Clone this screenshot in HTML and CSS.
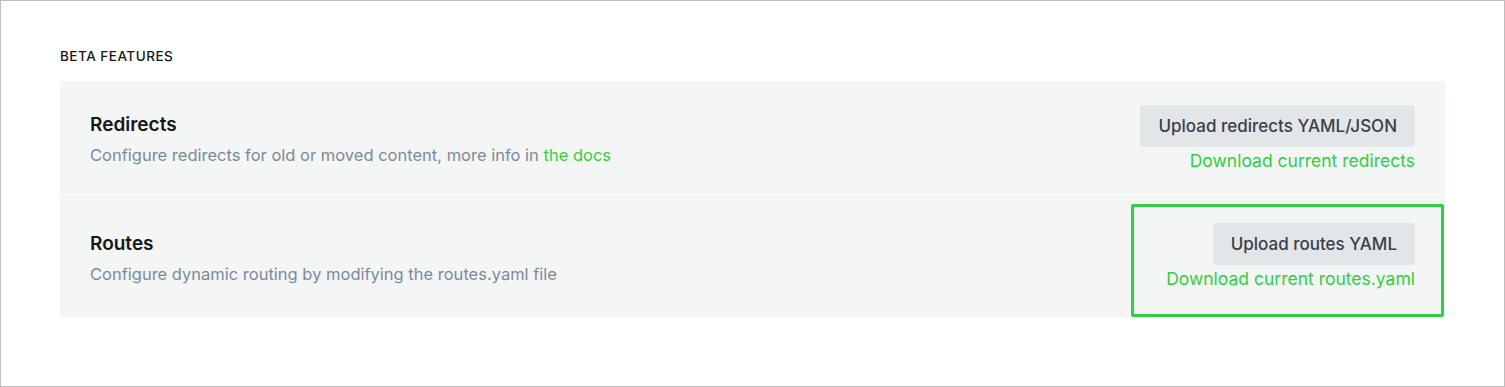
FILE: index.html
```html
<!DOCTYPE html>
<html>
<head>
<meta charset="utf-8">
<link rel="stylesheet" href="styles.css">
</head>
<body>
<div class="frame">
  <section class="section">
    <h4 class="section-label">BETA FEATURES</h4>
    <div class="card">
      <div class="row">
        <div class="info">
          <h3 class="title">Redirects</h3>
          <p class="desc">Configure redirects for old or moved content, more info in <a class="link" href="#">the docs</a></p>
        </div>
        <div class="actions">
          <button class="btn">Upload redirects YAML/JSON</button>
          <a class="link dl" href="#">Download current redirects</a>
        </div>
      </div>
      <div class="row row-divided">
        <div class="info">
          <h3 class="title">Routes</h3>
          <p class="desc">Configure dynamic routing by modifying the routes.yaml file</p>
        </div>
        <div class="actions">
          <button class="btn">Upload routes YAML</button>
          <a class="link dl" href="#">Download current routes.yaml</a>
        </div>
        <div class="highlight"></div>
      </div>
    </div>
  </section>
</div>
</body>
</html>
```

FILE: styles.css
```css
* { box-sizing: border-box; }
html, body { margin: 0; padding: 0; background: #fff; }
body {
  font-family: Inter, "Noto Sans", sans-serif;
  width: 1505px;
  height: 387px;
}
.frame {
  width: 1505px;
  height: 387px;
  border: 1px solid #bdbdbd;
  padding: 46px 59px 0 59px;
}
.section-label {
  margin: 0 0 15px 0;
  font-size: 13.5px;
  font-weight: 500;
  letter-spacing: 0.5px;
  color: #15171a;
  line-height: 19px;
}
.card {
  background: #f4f5f5;
  border-radius: 3px;
  width: 1385px;
}
.row {
  position: relative;
  display: flex;
  justify-content: space-between;
  align-items: center;
  padding: 24px 30px 0 30px;
  height: 118px;
}
.row-divided {
  border-top: 1px solid #fcfcfc;
  padding-top: 23px;
}
.info {
  display: flex;
  flex-direction: column;
  margin-top: -24px;
}
.row-divided .info { margin-top: -23px; }
.title {
  margin: 0;
  font-size: 19px;
  font-weight: 600;
  color: #15171a;
  line-height: 24px;
}
.desc {
  margin: 6px 0 0 0;
  font-size: 16.5px;
  color: #7c8b9a;
  line-height: 24px;
}
.link {
  color: #30cf43;
  text-decoration: none;
}
.actions {
  align-self: flex-start;
  display: flex;
  flex-direction: column;
  align-items: flex-end;
}
.btn {
  font-family: Inter, "Noto Sans", sans-serif;
  height: 42px;
  padding: 0 18px;
  border: none;
  border-radius: 4px;
  background: #e3e6e8;
  color: #394047;
  font-size: 17px;
  font-weight: 500;
}
.dl {
  margin-top: 3px;
  font-size: 17.5px;
  line-height: 22px;
}
.highlight {
  position: absolute;
  left: 1071px;
  top: 4px;
  width: 313px;
  height: 113px;
  border: 3px solid #30cf43;
  border-radius: 2px;
  pointer-events: none;
}
```
